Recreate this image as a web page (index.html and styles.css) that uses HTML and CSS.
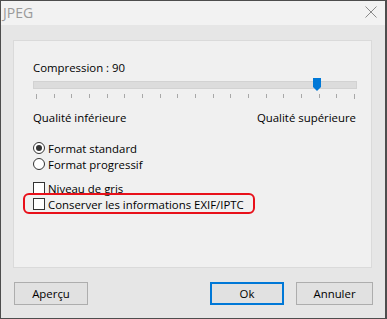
FILE: index.html
```html
<!DOCTYPE html>
<html lang="fr">
<head>
<meta charset="utf-8">
<title>JPEG</title>
<link rel="stylesheet" href="styles.css">
</head>
<body>
<div class="window">
  <div class="titlebar">
    <span class="title">JPEG</span>
    <svg class="close" width="12" height="12" viewBox="0 0 12 12"><path d="M0.5 0.5 L11.5 11.5 M11.5 0.5 L0.5 11.5" stroke="#8a8a8a" stroke-width="1" fill="none"/></svg>
  </div>
  <div class="body">
    <div class="panel">
      <div class="label-compression">Compression : 90</div>
      <div class="slider">
        <div class="track"></div>
        <svg class="thumb" width="8" height="13" viewBox="0 0 8 13"><path d="M0 0 H8 V9 L4 13 L0 9 Z" fill="#0078d7"/></svg>
      </div>
      <div class="ticks">
        <span class="tick long"></span><span class="tick"></span><span class="tick"></span><span class="tick"></span><span class="tick"></span><span class="tick"></span><span class="tick"></span><span class="tick"></span><span class="tick"></span><span class="tick"></span><span class="tick"></span><span class="tick"></span><span class="tick"></span><span class="tick"></span><span class="tick"></span><span class="tick"></span><span class="tick"></span><span class="tick"></span><span class="tick long"></span>
      </div>
      <div class="range-labels">
        <span>Qualité inférieure</span>
        <span>Qualité supérieure</span>
      </div>
      <div class="options radios">
        <div class="opt"><span class="radio checked"></span><span>Format standard</span></div>
        <div class="opt"><span class="radio"></span><span>Format progressif</span></div>
      </div>
      <div class="options checks">
        <div class="opt"><span class="check"></span><span>Niveau de gris</span></div>
        <div class="opt highlighted"><span class="check"></span><span>Conserver les informations EXIF/IPTC</span><span class="highlight"></span></div>
      </div>
    </div>
    <div class="buttons">
      <button class="btn">Aperçu</button>
      <button class="btn ok">Ok</button>
      <button class="btn cancel">Annuler</button>
    </div>
  </div>
</div>
</body>
</html>
```
FILE: styles.css
```css
* { box-sizing: border-box; }
html, body { margin: 0; padding: 0; }
body {
  font-family: "Open Sans", "Noto Sans", sans-serif;
  font-size: 11.4px;
  color: #000;
  background: #fff;
}
.window {
  width: 387px;
  height: 319px;
  border: 1px solid #4d4d4d;
  border-right-width: 2px;
  background: #e6e6e6;
  display: flex;
  flex-direction: column;
}
.titlebar {
  height: 24px;
  background: #f2f2f2;
  display: flex;
  align-items: center;
  justify-content: space-between;
  padding: 0 8px 0 2px;
}
.title {
  color: #9a9a9a;
  font-size: 14px;
  margin-top: -2px;
}
.close { display: block; margin-top: -2px; }
.body {
  flex: 1;
  padding: 15px 0 0 12px;
  display: flex;
  flex-direction: column;
}
.panel {
  width: 359px;
  height: 228px;
  background: #f0f0f0;
  border: 1px solid #dadada;
  padding: 19px 14px 0 19px;
  display: flex;
  flex-direction: column;
}
.label-compression {
  line-height: 16px;
}
.slider {
  position: relative;
  height: 13px;
  margin-top: 2px;
}
.track {
  position: absolute;
  left: 0;
  right: 0;
  top: 3px;
  height: 8px;
  background: #dcdcdc;
  border: 1px solid #d2d2d2;
}
.thumb {
  position: absolute;
  left: 280px;
  top: 0;
}
.ticks {
  display: flex;
  justify-content: space-between;
  padding: 0 2px 0 3px;
  margin-top: 3px;
  height: 6px;
}
.tick {
  width: 1px;
  height: 4px;
  background: #a8a8a8;
}
.tick.long { height: 5px; }
.range-labels {
  display: flex;
  justify-content: space-between;
  line-height: 16px;
  margin-top: 10px;
  padding-right: 1px;
}
.options {
  display: flex;
  flex-direction: column;
}
.radios { margin-top: 14px; }
.checks { margin-top: 8px; }
.opt {
  display: flex;
  align-items: center;
  height: 16px;
  gap: 3px;
  position: relative;
}
.radio {
  width: 12px;
  height: 12px;
  border: 1px solid #333;
  border-radius: 50%;
  background: #fff;
  display: flex;
  align-items: center;
  justify-content: center;
}
.radio.checked::after {
  content: "";
  width: 6px;
  height: 6px;
  border-radius: 50%;
  background: #333;
}
.check {
  width: 12px;
  height: 12px;
  border: 1px solid #333;
  background: #fff;
}
.highlight {
  position: absolute;
  left: -10px;
  top: -3px;
  width: 232px;
  height: 21px;
  border: 2px solid #e8101a;
  border-radius: 6px;
}
.buttons {
  display: flex;
  margin-top: 14px;
  padding-left: 1px;
}
.btn {
  font-family: inherit;
  font-size: 11.4px;
  height: 23px;
  width: 74px;
  background: #e1e1e1;
  border: 1px solid #adadad;
  padding: 0;
  color: #000;
}
.btn.ok {
  margin-left: auto;
  border: 2px solid #0078d7;
}
.btn.cancel {
  width: 77px;
  margin-left: 12px;
  margin-right: 12px;
}
```
